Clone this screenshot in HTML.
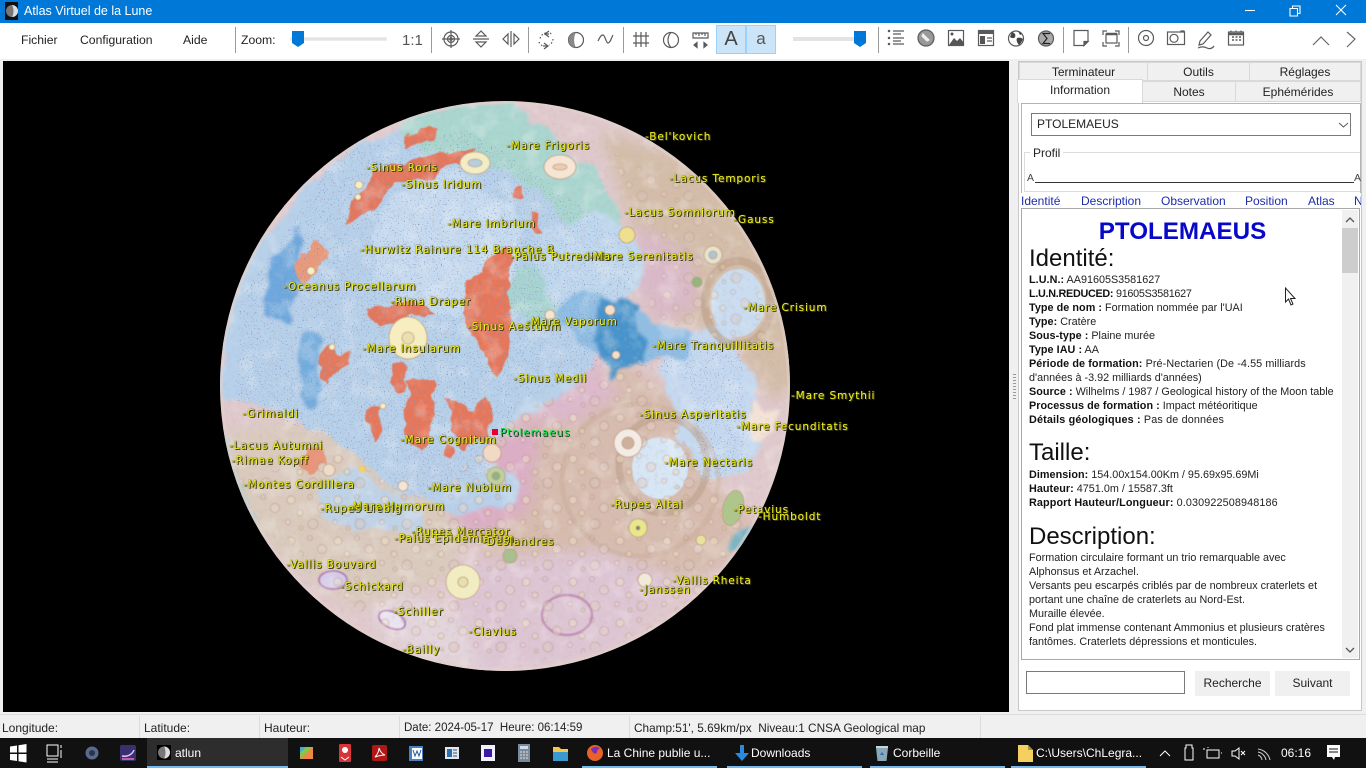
<!DOCTYPE html>
<html lang="fr"><head><meta charset="utf-8"><title>Atlas Virtuel de la Lune</title>
<style>
html,body{margin:0;padding:0;width:1366px;height:768px;overflow:hidden;background:#f0f0f0;font-family:"Liberation Sans",sans-serif}
.a{position:absolute;white-space:nowrap}
.bar{position:absolute;background:#0078d7;left:0;top:0;width:1366px;height:23px}
.ui{font-size:12.2px;color:#222}
.sep{position:absolute;top:27px;height:26px;width:1px;background:#9a9a9a}
.l{position:absolute;white-space:nowrap;font:10.5px "DejaVu Sans",sans-serif;letter-spacing:.88px;color:#f2f21c;text-shadow:1px 1px 0 #3a3a10,0 0 1px #4c4c18,1px 0 1px #55551c;transform:translateY(-50%);line-height:12px}
.t{position:absolute;background:#f0f0f0;border:1px solid #d9d9d9;box-sizing:border-box;text-align:center;font-size:12px;color:#222;line-height:19px}
.p{position:absolute;left:1029px;font-size:10.8px;line-height:14px;color:#222;white-space:nowrap}
.p b{color:#111;letter-spacing:.05px}
.h{position:absolute;left:1029px;font-size:24px;line-height:28px;color:#111;white-space:nowrap}
.nav{position:absolute;top:194px;font-size:12px;color:#1e2ca8;white-space:nowrap;line-height:14px}
.s{position:absolute;top:721px;font-size:12px;color:#222;white-space:nowrap;line-height:14px}
.d{position:absolute;top:716px;width:1px;height:22px;background:#dcdcdc}
.tb{position:absolute;top:746px;font-size:12px;color:#fff;white-space:nowrap;line-height:14px}
.u{position:absolute;top:766px;height:2px;background:#76b9ed}
svg{position:absolute;left:0;top:0;overflow:visible}
</style></head><body>

<div class="bar"></div>
<svg width="20" height="20" style="left:5px;top:2px" viewBox="0 0 20 20"><rect width="13" height="18" fill="#111"/><circle cx="7" cy="9" r="6" fill="#777"/><path d="M7 3a6 6 0 0 1 0 12c2-3 2-9 0-12z" fill="#dedede"/></svg>
<div class="a" style="left:24px;top:4px;font-size:12.5px;line-height:15px;color:#fff">Atlas Virtuel de la Lune</div>
<svg width="1366" height="23" fill="none" stroke="#fff" stroke-width="1.100"><path d="M1245 10.500h10"/><path d="M1290 8.500h7.500v7.500h-7.500zM1292.500 8.500v-2.500h7.500v7.500h-2.500"/><path d="M1336 5l10 10M1346 5l-10 10"/></svg>

<div class="a" style="left:0;top:23px;width:1366px;height:36px;background:#fff"></div>
<div class="a ui" style="left:21px;top:33px">Fichier</div>
<div class="a ui" style="left:80px;top:33px">Configuration</div>
<div class="a ui" style="left:183px;top:33px">Aide</div>
<div class="a ui" style="left:241px;top:33px">Zoom:</div>
<div class="a" style="left:402px;top:32px;font-size:15px;color:#555">1:1</div>
<div class="sep" style="left:235px"></div><div class="sep" style="left:431px"></div><div class="sep" style="left:528px"></div><div class="sep" style="left:623px"></div><div class="sep" style="left:878px"></div><div class="sep" style="left:1063px"></div><div class="sep" style="left:1128px"></div>
<div class="a" style="left:290px;top:37px;width:97px;height:4px;background:#e3e3e3;border:1px solid #ececec;box-sizing:border-box"></div>
<div class="a" style="left:793px;top:37px;width:73px;height:4px;background:#e3e3e3"></div>
<div class="a" style="left:716px;top:25px;width:30px;height:29px;background:#cce4f7;border:1px solid #99d1ff;box-sizing:border-box;text-align:center;font-size:20px;line-height:27px;color:#444">A</div>
<div class="a" style="left:746px;top:25px;width:30px;height:29px;background:#cce4f7;border:1px solid #99d1ff;box-sizing:border-box;text-align:center;font-size:17px;line-height:25px;color:#555">a</div>

<svg width="1366" height="60" fill="none" stroke="#5a5a5a" stroke-width="1.200">
<path d="M292 31h12v12l-6 4-6-4z M854 31h12v12l-6 4-6-4z" fill="#0078d7" stroke="none"/>
<circle cx="451" cy="39" r="7"/><circle cx="451" cy="39" r="3.500"/><circle cx="451" cy="39" r="1.200" fill="#5a5a5a"/><path d="M451 30v18M442 39h18"/>
<path d="M473 39h16M481 31l-5 5h10zM481 47l-5-5h10z"/>
<path d="M511 31v16M503 39l5-5v10zM519 39l-5-5v10z"/>
<path d="M546 33a7 7 0 0 0-6 6M553 39a7 7 0 0 1-4 6M539 42a7 7 0 0 0 4 4M550 33a7 7 0 0 1 2 2" stroke-dasharray="1.500 2"/><path d="M549 31l-4 3 4 3M544 43l4 3-4 3M544 34h5M543 46h5"/>
<circle cx="576" cy="40" r="7.500"/><path d="M576 32.500a7.500 7.500 0 0 0 0 15c-2.500-4-2.500-11 0-15z" fill="#888" stroke="none"/>
<path d="M598 41c2-4 3-6 5-6s3 8 5 8 3-4 5-8" />
<path d="M636 32v15M641 32v15M646 32v15M633 36h16M633 43h16"/>
<circle cx="671" cy="40" r="7.500"/><path d="M671 32.500c-4 4-4 11 0 15"/>
<path d="M693 33h15v5h-15zM696 33v2M699 33v3M702 33v2M705 33v3"/><path d="M694 45l3-2.500v5zM707 45l-3-2.500v5z" fill="#5a5a5a"/>
<path d="M889 31h0M889 38h0M889 44h0" stroke-width="2.500" stroke-linecap="round"/><path d="M893 31h11M893 34h8M893 38h11M893 41h8M893 44h11"/>
<circle cx="926" cy="38" r="8" fill="#999"/><path d="M923 34l6 6-2 1-5-5z" fill="#eee" stroke="#eee"/>
<rect x="948.500" y="30.500" width="15" height="15" fill="#fff"/><path d="M949 45l5-7 3 3 3-3 4 5v2z" fill="#555" stroke="none"/><circle cx="952" cy="34" r="1.500" fill="#555" stroke="none"/>
<rect x="978.500" y="30.500" width="15" height="15"/><path d="M979 32.500h14" stroke-width="3"/><rect x="980" y="36" width="5" height="8" fill="#555" stroke="none"/><path d="M987 38h5M987 41h5"/>
<circle cx="1016" cy="38.500" r="7.500"/><path d="M1012 32c3 1 4 3 3 5s-4 1-5 0zM1017 38c3-1 5 0 6 1-1 3-3 5-4 6-2-2-3-5-2-7zM1018 31l4 3-2 1z" fill="#444" stroke="none"/>
<circle cx="1046" cy="38.500" r="7.500" fill="#aaa"/><path d="M1050 33.500h-7l4 5-4 5h7" stroke="#222"/>
<path d="M1074 30.500h14v11l-4 4h-10z"/><path d="M1088 41.500h-4v4z" fill="#555"/>
<rect x="1106" y="34" width="11" height="9"/><path d="M1106 34h11" stroke-width="2.500"/><path d="M1103 35v-4h4M1115 31h4v4M1103 42v4h4M1119 42v4h-4"/>
<circle cx="1146" cy="38" r="7.500"/><circle cx="1146" cy="38" r="2.500"/>
<rect x="1167.500" y="32" width="17" height="12.500"/><circle cx="1174" cy="38.300" r="4"/><path d="M1181 32v-1h3v1"/>
<path d="M1200 41l8-9 3 3-8 9-4 1z"/><path d="M1198 48c4-2 7-1 9 0s5 1 7-2"/>
<rect x="1228.500" y="32" width="15" height="13"/><path d="M1229 34h14" stroke-width="2.500"/><path d="M1231 30.500v2M1236 30.500v2M1241 30.500v2"/><path d="M1232 37h2M1235.500 37h2M1239 37h2M1232 40h2M1235.500 40h2M1239 40h2" stroke-width="1.500"/>
<path d="M1313 45l8-8 8 8M1347 32l8 7-8 8" stroke="#666"/>
</svg>

<div class="a" style="left:3px;top:61px;width:1006px;height:651px;background:#000"></div>

<svg width="1366" height="768" viewBox="0 0 1366 768">
<defs>
<clipPath id="m"><circle cx="505" cy="386" r="285"/></clipPath>
<clipPath id="mare"><path d="M240 300L340 150 470 130 560 190 640 250 620 340 740 340 750 470 700 480 690 380 620 360 520 400 490 470 420 500 330 440 235 400z"/></clipPath>
<filter id="b2" x="-20%" y="-20%" width="140%" height="140%"><feGaussianBlur stdDeviation="7"/></filter>
<filter id="wob" x="-10%" y="-10%" width="120%" height="120%"><feTurbulence type="fractalNoise" baseFrequency=".045" numOctaves="3" seed="5" result="n"/><feDisplacementMap in="SourceGraphic" in2="n" scale="16" xChannelSelector="R" yChannelSelector="G"/><feGaussianBlur stdDeviation=".6"/></filter>
<filter id="wob2" x="-10%" y="-10%" width="120%" height="120%"><feTurbulence type="fractalNoise" baseFrequency=".03" numOctaves="3" seed="12" result="n"/><feDisplacementMap in="SourceGraphic" in2="n" scale="26" xChannelSelector="R" yChannelSelector="G"/><feGaussianBlur stdDeviation="1.500"/></filter>
<filter id="sf"><feGaussianBlur stdDeviation=".6"/></filter>
<filter id="sp" x="0" y="0" width="100%" height="100%"><feTurbulence type="fractalNoise" baseFrequency=".7" numOctaves="2" seed="4"/><feColorMatrix values="0 0 0 0 .2 0 0 0 0 .26 0 0 0 0 .5 0 0 0 11 -7.200"/></filter>
<filter id="tx" x="0" y="0" width="100%" height="100%"><feTurbulence type="fractalNoise" baseFrequency=".05" numOctaves="3" seed="9"/><feColorMatrix values="0 0 0 0 .98 0 0 0 0 .96 0 0 0 0 .94 0 0 0 4 -2"/></filter>
<filter id="tz" x="0" y="0" width="100%" height="100%"><feTurbulence type="fractalNoise" baseFrequency=".22" numOctaves="3" seed="21"/><feColorMatrix values="0 0 0 0 .62 0 0 0 0 .42 0 0 0 0 .42 0 0 0 5 -2.800"/></filter>
<pattern id="cr" width="47" height="41" patternUnits="userSpaceOnUse">
<g fill="none" stroke="#b98f86" stroke-width="1">
<circle cx="9" cy="8" r="4" fill="#efe4c6"/><circle cx="28" cy="5" r="2.500"/><circle cx="40" cy="16" r="4.500" fill="#e7d4cc"/><circle cx="18" cy="21" r="3" fill="#e5e2b4"/><circle cx="6" cy="30" r="2.500" fill="#ecd7d2"/><circle cx="31" cy="32" r="5" fill="#dcc7be"/><circle cx="19" cy="36" r="2" fill="#c9d6a4"/>
</g></pattern>
</defs>
<g clip-path="url(#m)">
<rect x="220" y="100" width="572" height="572" fill="#dfc9cd"/>
<g filter="url(#b2)">
<path d="M600 130L720 170 800 300 800 390 770 400 720 330 650 320 640 250z" fill="#d3bda9"/>
<path d="M520 420l100-60 60 40 40 90 40 40-40 40-120 30-110-20-20-80z" fill="#d6bcae"/>
<path d="M225 430l110-10 90 40 50 70-30 50-90 30-90-60-40-70z" fill="#d9cabd"/>
<path d="M470 560l130-10 80 30-70 70-130 30-30-50z" fill="#ddc6d4"/>
<path d="M400 590l60 30 20 50-60-10-50-40z" fill="#e2d6dc"/>
<path d="M490 440l50-20-10 90-60 30-30-40z" fill="#dbaec6"/>
<path d="M530 345l60 10 30 40-50 30-60-10z" fill="#dcb9cc"/>
<path d="M500 340l30-10 20 50-20 30-30-10z" fill="#d3b3c8"/>
<path d="M640 225l50 30 10 50-40 20-30-50z" fill="#d9b9c8"/>
</g>
<g filter="url(#wob2)">
<path d="M228 400L222 340C235 270 280 205 340 155 390 125 460 112 510 125 560 150 600 200 630 240 640 280 625 320 605 350 570 395 520 415 505 430 490 470 440 498 410 492 370 480 340 430 290 418 260 410 240 400 228 400z" fill="#b7d1ea"/>
<path d="M400 108l110-6 90 71 25 55-40 12-55-55-60-30-30 5-40-25z" fill="#a9d6cf"/>
<path d="M500 258l40 10 25 45-25 15-45-25-6-30z" fill="#a7d4d2"/>
<path d="M660 335l70-8 30 60-8 90-45 5-32-45z" fill="#c4d9f0"/>
<path d="M752 405l22 0 0 26-20 16-12-22z" fill="#f3e2d6"/>
<circle cx="445" cy="245" r="72" fill="#c6dbf0"/>
<ellipse cx="590" cy="265" rx="55" ry="48" fill="#c0d8ee"/>
<path d="M545 305l55-14 40 20 55 22-15 22-50 10-40-20-30-25z" fill="#8fbee4"/>
<path d="M600 298l38 5 4 55-28 18-18-40z" fill="#4794cc"/>
<path d="M262 300l10-45 28-30 2 30-6 50-8 14-20-2z" fill="#6da8de"/>
<path d="M303 335l16 2 3 48-6 22-20-12z" fill="#72addf"/>
<path d="M222 425l12 50 40 90 30 30-40 0-50-110z" fill="#9dcbc8"/>
<path d="M735 535l30-25 8-6-22 42-18 10z" fill="#7bb6c6"/>
<path d="M400 440l50-10 40 30 30 30-10 20-60 5-50-30z" fill="#b8d0e9"/>
<path d="M320 490l30-20 60 30 20 30-70 0-40-15z" fill="#bed3e8"/>
</g>
<g filter="url(#wob)">
<path d="M402 136q18-9 35-8l-4 10-28 8zM347 224l6-28 20-22 30-12 30-8 26-6 20 0-12 12-36 18-30 5-14 10-12 18-14 4z" fill="#e4775c"/>
<path d="M513 184l9-1 0 14-9 0zM530 212l8 0 3 22-8 0z" fill="#e4775c"/>
<path d="M296 262l5-12 16-8 10 10-5 22-16 8-8-6z" fill="#e99a7c"/>
<path d="M466 280l22-20 22-12 0 60-2 60-10 12-14-28-12-16-8-28z" fill="#e6775a"/>
<path d="M366 310l20-8 30 0 14 10-20 6-8 6-28 2z" fill="#e3775b"/>
<path d="M322 352l10-8 4 8 16-2-6 14-12 8-6 12-6-6 2-12-6-6z" fill="#e47a5d"/>
<path d="M388 366l12-4 8 8-2 16-10 8-8-14zM408 382l24-2 4 30-4 30-10 12-10-8-8-30z" fill="#e6775a"/>
<path d="M444 398l16 4 12 10 14-16 6 24-2 24-14-4-12 8-12-18zM446 442l8 2-2 14-8-6zM366 412l16-4-2 20-6 12-4-14-6-6z" fill="#e6775a"/>
<path d="M308 448l14-2 2 20-16 6-6-10z" fill="#e8957a"/>
</g>
<g fill="none" filter="url(#sf)">
<ellipse cx="738" cy="303" rx="33" ry="42" stroke="#bda288" stroke-width="8" opacity=".65"/>
<ellipse cx="738" cy="303" rx="27" ry="34" fill="#c9dcf0"/>
<ellipse cx="663" cy="465" rx="44" ry="48" stroke="#b99c86" stroke-width="7" opacity=".55"/>
<ellipse cx="660" cy="468" rx="28" ry="31" fill="#d6e6f5"/>
<ellipse cx="640" cy="480" rx="78" ry="76" stroke="#c7a78f" stroke-width="5" opacity=".35"/>
<ellipse cx="567" cy="615" rx="25" ry="20" stroke="#bb85b0" stroke-width="2.500" opacity=".8"/>
<ellipse cx="333" cy="580" rx="14" ry="9" fill="#d3cbe8" stroke="#b583b6" stroke-width="2"/>
<ellipse cx="392" cy="620" rx="14" ry="8" fill="#e8e3f0" stroke="#b583b6" stroke-width="2" transform="rotate(25 392 620)"/>
</g>
<path d="M500 420L640 360 700 470 760 530 680 620 560 660 420 650 330 590 240 480 340 450 430 510z" fill="url(#cr)" opacity=".45" filter="url(#sf)"/>
<path d="M610 150L690 190 760 290 780 370 730 340 650 320 650 240z" fill="url(#cr)" opacity=".35" filter="url(#sf)"/>
<rect x="220" y="100" width="572" height="572" filter="url(#tz)" opacity=".18"/>
<rect x="220" y="100" width="572" height="572" filter="url(#tx)" opacity=".22"/>
<g clip-path="url(#mare)"><rect x="220" y="100" width="572" height="572" filter="url(#sp)" opacity=".75"/></g>
<circle cx="505" cy="386" r="283.500" fill="none" stroke="#e2d2cc" stroke-width="3" opacity=".55"/>
<g stroke="#c09a80" stroke-width=".8" filter="url(#sf)">
<ellipse cx="408" cy="338" rx="19" ry="21" fill="#f6edc0"/><circle cx="408" cy="338" r="6" fill="#e8e0ae"/>
<ellipse cx="475" cy="163" rx="15" ry="11" fill="#f3edc6"/><ellipse cx="475" cy="163" rx="7" ry="4" fill="#b5cfdc"/>
<ellipse cx="560" cy="167" rx="16" ry="12" fill="#f6e4d4"/><ellipse cx="560" cy="167" rx="7" ry="3" fill="#eccdb4"/>
<circle cx="463" cy="582" r="17" fill="#f1ecc2"/><circle cx="463" cy="582" r="5" fill="#e6e0ac"/>
<circle cx="627" cy="235" r="8" fill="#eee08e"/>
<circle cx="713" cy="255" r="9" fill="#e8e2cd"/><circle cx="713" cy="255" r="4" fill="#a9c6d6"/>
<circle cx="697" cy="282" r="5" fill="#8fb77e"/>
<circle cx="628" cy="443" r="14" fill="#f3ece6"/><circle cx="628" cy="443" r="6" fill="#cfb09c"/>
<circle cx="638" cy="528" r="9" fill="#e6e88a"/><circle cx="638" cy="528" r="2" fill="#777"/>
<ellipse cx="733" cy="508" rx="10" ry="18" fill="#aec68c" transform="rotate(15 733 508)"/>
<circle cx="496" cy="476" r="9" fill="#bcd29c"/><circle cx="496" cy="476" r="4" fill="#90b480"/>
<circle cx="492" cy="453" r="9" fill="#f2d9c6"/>
<circle cx="610" cy="310" r="5" fill="#f6dfc8"/><circle cx="616" cy="355" r="4" fill="#f6dfc8"/>
<circle cx="550" cy="315" r="5" fill="#f4e7d0"/>
<circle cx="359" cy="185" r="4" fill="#f6f0c4"/><circle cx="358" cy="197" r="3" fill="#f6f0c4"/><circle cx="311" cy="271" r="4" fill="#f6f0c4"/>
<circle cx="332" cy="347" r="3" fill="#f6f0c4"/><circle cx="383" cy="406" r="3" fill="#f6f0c4"/>
<circle cx="403" cy="486" r="5" fill="#f3e6d8"/><circle cx="329" cy="470" r="6" fill="#ecdcc8"/>
<circle cx="362" cy="469" r="3" fill="#f5d650" stroke="none"/>
<circle cx="645" cy="580" r="7" fill="#f2ead8"/><circle cx="510" cy="556" r="7" fill="#a6c08e"/><circle cx="701" cy="540" r="5" fill="#e8e2a0"/>
</g>
</g>
<rect x="492" y="429" width="6" height="6" fill="#e8002a"/>
</svg>

<div class="l" style="left:645px;top:137px">-Bel'kovich</div>
<div class="l" style="left:506px;top:146px">-Mare Frigoris</div>
<div class="l" style="left:366px;top:168px">-Sinus Roris</div>
<div class="l" style="left:669px;top:179px">-Lacus Temporis</div>
<div class="l" style="left:401px;top:185px">-Sinus Iridum</div>
<div class="l" style="left:624px;top:213px">-Lacus Somniorum</div>
<div class="l" style="left:733px;top:220px">-Gauss</div>
<div class="l" style="left:447px;top:224px">-Mare Imbrium</div>
<div class="l" style="left:360px;top:250px">-Hurwitz Rainure 114 Branche B</div>
<div class="l" style="left:510px;top:257px">-Palus Putredinis</div>
<div class="l" style="left:589px;top:257px">-Mare Serenitatis</div>
<div class="l" style="left:283px;top:287px">-Oceanus Procellarum</div>
<div class="l" style="left:390px;top:302px">-Rima Draper</div>
<div class="l" style="left:743px;top:308px">-Mare Crisium</div>
<div class="l" style="left:467px;top:327px">-Sinus Aestuum</div>
<div class="l" style="left:526px;top:322px">-Mare Vaporum</div>
<div class="l" style="left:652px;top:346px">-Mare Tranquillitatis</div>
<div class="l" style="left:362px;top:349px">-Mare Insularum</div>
<div class="l" style="left:513px;top:379px">-Sinus Medii</div>
<div class="l" style="left:791px;top:396px">-Mare Smythii</div>
<div class="l" style="left:242px;top:414px">-Grimaldi</div>
<div class="l" style="left:639px;top:415px">-Sinus Asperitatis</div>
<div class="l" style="left:736px;top:427px">-Mare Fecunditatis</div>
<div class="l" style="left:500px;top:433px;color:#10e040;text-shadow:1px 1px 0 #0c4420">Ptolemaeus</div>
<div class="l" style="left:400px;top:440px">-Mare Cognitum</div>
<div class="l" style="left:229px;top:446px">-Lacus Autumni</div>
<div class="l" style="left:231px;top:461px">-Rimae Kopff</div>
<div class="l" style="left:664px;top:463px">-Mare Nectaris</div>
<div class="l" style="left:243px;top:485px">-Montes Cordillera</div>
<div class="l" style="left:427px;top:488px">-Mare Nubium</div>
<div class="l" style="left:348px;top:507px">-Mare Humorum</div>
<div class="l" style="left:320px;top:509px">-Rupes Liebig</div>
<div class="l" style="left:610px;top:505px">-Rupes Altai</div>
<div class="l" style="left:733px;top:510px">-Petavius</div>
<div class="l" style="left:758px;top:517px">-Humboldt</div>
<div class="l" style="left:411px;top:532px">-Rupes Mercator</div>
<div class="l" style="left:394px;top:539px">-Palus Epidemiarum</div>
<div class="l" style="left:482px;top:542px">-Deslandres</div>
<div class="l" style="left:286px;top:565px">-Vallis Bouvard</div>
<div class="l" style="left:340px;top:587px">-Schickard</div>
<div class="l" style="left:672px;top:581px">-Vallis Rheita</div>
<div class="l" style="left:639px;top:590px">-Janssen</div>
<div class="l" style="left:393px;top:612px">-Schiller</div>
<div class="l" style="left:468px;top:632px">-Clavius</div>
<div class="l" style="left:402px;top:650px">-Bailly</div>

<div class="a" style="left:1013px;top:374px;width:3px;height:26px;background:repeating-linear-gradient(#999 0 1px,transparent 1px 3px)"></div>

<div class="a" style="left:1018px;top:61px;width:344px;height:650px;background:#fff;border:1px solid #c8c8c8;box-sizing:border-box"></div>
<div class="t" style="left:1019px;top:62px;width:129px;height:19px">Terminateur</div>
<div class="t" style="left:1147px;top:62px;width:103px;height:19px">Outils</div>
<div class="t" style="left:1249px;top:62px;width:112px;height:19px">Réglages</div>
<div class="t" style="left:1142px;top:81px;width:94px;height:21px;line-height:20px">Notes</div>
<div class="t" style="left:1235px;top:81px;width:126px;height:21px;line-height:20px">Ephémérides</div>
<div class="t" style="left:1017px;top:79px;width:126px;height:24px;background:#fff;border-bottom:0;line-height:20px">Information</div>
<div class="a" style="left:1021px;top:103px;width:340px;height:90px;border:1px solid #b5b5b5;border-bottom:0;box-sizing:border-box"></div>
<div class="a" style="left:1031px;top:113px;width:320px;height:23px;border:1px solid #7a7a7a;box-sizing:border-box;font-size:12px;line-height:20px;padding-left:5px;color:#222">PTOLEMAEUS</div>
<svg width="1366" height="200" fill="none" stroke="#555"><path d="M1339 123l4.500 4 4.500-4"/></svg>
<div class="a" style="left:1024px;top:152px;width:336px;height:40px;border:1px solid #dcdcdc;border-right:0;box-sizing:border-box"></div>
<div class="a" style="left:1030px;top:146px;padding:0 3px;background:#fff;font-size:12px;line-height:14px;color:#222">Profil</div>
<div class="a" style="left:1027px;top:172px;font-size:10.500px;color:#444;line-height:12px">A</div>
<div class="a" style="left:1035px;top:182px;width:319px;height:1px;background:#333"></div>
<div class="a" style="left:1354px;top:172px;font-size:10.500px;color:#444;line-height:12px">A</div>
<div class="a" style="left:1021px;top:192px;width:340px;height:16px;overflow:hidden">
<span class="nav" style="left:0;top:2px">Identité</span><span class="nav" style="left:60px;top:2px">Description</span><span class="nav" style="left:140px;top:2px">Observation</span><span class="nav" style="left:224px;top:2px">Position</span><span class="nav" style="left:287px;top:2px">Atlas</span><span class="nav" style="left:333px;top:2px">N</span>
</div>
<div class="a" style="left:1021px;top:208px;width:339px;height:452px;border:1px solid #a8a8a8;box-sizing:border-box;background:#fff"></div>
<div class="a" style="left:1342px;top:210px;width:16px;height:448px;background:#f0f0f0"></div>
<div class="a" style="left:1342px;top:228px;width:16px;height:45px;background:#cdcdcd"></div>
<svg width="1366" height="660" fill="none" stroke="#555" stroke-width="1.300"><path d="M1346 222l4-4 4 4M1346 648l4 4 4-4"/></svg>

<div class="a" style="left:1022px;top:217px;width:321px;text-align:center;font-size:24.200px;font-weight:bold;color:#0808c8;line-height:29px">PTOLEMAEUS</div>
<div class="h" style="top:245px">Identité:</div>
<div class="p" style="top:273px"><b>L.U.N.:</b> AA91605S3581627</div>
<div class="p" style="top:287px;letter-spacing:-.28px"><b style="letter-spacing:-.28px">L.U.N.REDUCED:</b> 91605S3581627</div>
<div class="p" style="top:301px"><b>Type de nom :</b> Formation nommée par l'UAI</div>
<div class="p" style="top:315px"><b>Type:</b> Cratère</div>
<div class="p" style="top:329px"><b>Sous-type :</b> Plaine murée</div>
<div class="p" style="top:343px"><b>Type IAU :</b> AA</div>
<div class="p" style="top:357px;letter-spacing:.09px"><b style="letter-spacing:.09px">Période de formation:</b> Pré-Nectarien (De -4.55 milliards</div>
<div class="p" style="top:371px">d'années à -3.92 milliards d'années)</div>
<div class="p" style="top:385px"><b>Source :</b> Wilhelms / 1987 / Geological history of the Moon table</div>
<div class="p" style="top:399px"><b>Processus de formation :</b> Impact météoritique</div>
<div class="p" style="top:413px;letter-spacing:.15px"><b style="letter-spacing:.15px">Détails géologiques :</b> Pas de données</div>
<div class="h" style="top:439px">Taille:</div>
<div class="p" style="top:468px"><b>Dimension:</b> 154.00x154.00Km / 95.69x95.69Mi</div>
<div class="p" style="top:482px"><b>Hauteur:</b> 4751.0m / 15587.3ft</div>
<div class="p" style="top:496px;letter-spacing:.12px"><b style="letter-spacing:.12px">Rapport Hauteur/Longueur:</b> 0.030922508948186</div>
<div class="h" style="top:523px">Description:</div>
<div class="p" style="top:551px">Formation circulaire formant un trio remarquable avec</div>
<div class="p" style="top:565px">Alphonsus et Arzachel.</div>
<div class="p" style="top:579px">Versants peu escarpés criblés par de nombreux craterlets et</div>
<div class="p" style="top:593px">portant une chaîne de craterlets au Nord-Est.</div>
<div class="p" style="top:607px">Muraille élevée.</div>
<div class="p" style="top:621px">Fond plat immense contenant Ammonius et plusieurs cratères</div>
<div class="p" style="top:635px">fantômes. Craterlets dépressions et monticules.</div>

<svg width="1366" height="320" fill="#fff" stroke="#222" stroke-width="1"><path d="M1285.500 288v14l3-3 2.500 6 2-1-2.500-5.500h4.500z"/></svg>

<div class="a" style="left:1026px;top:671px;width:159px;height:23px;border:1px solid #7a7a7a;box-sizing:border-box;background:#fff"></div>
<div class="a" style="left:1195px;top:671px;width:75px;height:25px;background:#f0f0f0;text-align:center;font-size:12px;line-height:25px;color:#222">Recherche</div>
<div class="a" style="left:1275px;top:671px;width:75px;height:25px;background:#f0f0f0;text-align:center;font-size:12px;line-height:25px;color:#222">Suivant</div>

<div class="a" style="left:0;top:714px;width:1366px;height:1px;background:#dcdcdc"></div>
<div class="s" style="left:2px">Longitude:</div><div class="s" style="left:144px">Latitude:</div><div class="s" style="left:264px">Hauteur:</div>
<div class="s" style="left:404px;font-size:11.500px">Date: 2024-05-17&nbsp;&nbsp;Heure: 06:14:59</div>
<div class="s" style="left:634px;font-size:11.800px">Champ:51', 5.69km/px&nbsp;&nbsp;Niveau:1 CNSA Geological map</div>
<div class="d" style="left:139px"></div><div class="d" style="left:259px"></div><div class="d" style="left:399px"></div><div class="d" style="left:629px"></div><div class="d" style="left:980px"></div>

<div class="a" style="left:0;top:738px;width:1366px;height:30px;background:#111"></div>
<div class="a" style="left:147px;top:738px;width:141px;height:30px;background:#2d2d2d"></div>
<div class="u" style="left:147px;width:141px"></div><div class="u" style="left:582px;width:135px"></div><div class="u" style="left:727px;width:135px"></div><div class="u" style="left:870px;width:135px"></div><div class="u" style="left:1011px;width:135px"></div>
<svg width="1366" height="768" fill="none">
<path d="M10 746.500l7-1v7h-7zM18.500 745.300l8-1.300v8.500h-8zM10 754h7v7l-7-1zM18.500 754h8v8.500l-8-1.300z" fill="#fff"/>
<path d="M47 745h11v11h-11zM47 759h11M47 762h11M61 745v3M61 750v8" stroke="#fff"/>
<circle cx="92" cy="753" r="6.500" fill="#5a6a8a"/><circle cx="92" cy="753" r="3" fill="#2a3450"/>
<rect x="120" y="745" width="16" height="16" rx="2" fill="#3a3070"/><path d="M122 756c5 1 10-1 12-6" stroke="#d8c8ff" stroke-width="1.500"/><path d="M122 759h12" stroke="#c060a0" stroke-width="2"/>
<rect x="157" y="745" width="14" height="15" fill="#000"/><circle cx="164" cy="752.500" r="6" fill="#777"/><path d="M164 746.500a6 6 0 0 1 0 12c2-3 2-9 0-12z" fill="#ddd"/>
<rect x="300" y="747" width="13" height="12" fill="#8bc34a"/><path d="M300 759l13-12v12z" fill="#e84"/><path d="M300 747h6l-6 6z" fill="#4ad"/>
<rect x="339" y="744" width="12" height="18" rx="1" fill="#d8353a"/><circle cx="345" cy="750" r="3" fill="#fff"/><path d="M341 757l4 3 4-3" stroke="#fff"/>
<rect x="372" y="745" width="15" height="16" rx="2" fill="#b01818"/><path d="M375 757c3-3 4-7 4-9 1 3 3 6 6 7-3 0-7 1-10 2z" stroke="#fff"/>
<rect x="409" y="746" width="14" height="15" fill="#4a80c0"/><rect x="412" y="748" width="10" height="11" fill="#fff"/><path d="M413 750l2 6 2-5 2 5 2-6" stroke="#2a5a9a"/>
<rect x="445" y="747" width="14" height="12" fill="#dfe8f2"/><rect x="447" y="749" width="5" height="8" fill="#2a70b0"/><path d="M453 750h4M453 753h4M453 756h4" stroke="#456"/>
<rect x="481" y="745" width="14" height="16" fill="#f0f0ff"/><rect x="484" y="749" width="8" height="8" fill="#3a1aa0"/>
<rect x="518" y="744" width="12" height="18" fill="#7a8a9a"/><rect x="520" y="746" width="8" height="3" fill="#cde"/><path d="M520 752h8M520 755h8M520 758h8" stroke="#ddd" stroke-dasharray="2 1"/>
<path d="M553 747h6l2 2h7v12h-15z" fill="#f5c84c"/><rect x="553" y="752" width="15" height="9" fill="#3a9ad0"/>
<circle cx="595" cy="753" r="8" fill="#e8632a"/><path d="M591 749c3-3 7-3 9 0-2 0-3 1-3 3s-4 3-6-3z" fill="#7a30b0"/>
<path d="M740 745v8h-5l7 8 7-8h-5v-8z" fill="#2a8ae0"/>
<path d="M876 748h12l-1.500 13h-9z" fill="#8aa8b8"/><rect x="876" y="746" width="12" height="2" fill="#c8d4dc"/><path d="M880 755l2-3 2 3z" fill="#2a70b0"/>
<path d="M1018 745h10l5 5v12h-15z" fill="#f5d060"/><path d="M1028 745v5h5z" fill="#9a9a40"/>
<g stroke="#fff" stroke-width="1"><path d="M1160 756l5-5 5 5"/><path d="M1186 745h6v3h1v12h-8v-12h1z"/><path d="M1207 750h12v8h-12zM1204 748v2M1208 748v-1M1221 753h1" /><path d="M1232 751h3l4-3v11l-4-3h-3zM1241 751l4 4M1245 751l-4 4"/><path d="M1258 760v0M1262 760a6 6 0 0 0-4-5M1266 760a10 10 0 0 0-8-8M1270 760a14 14 0 0 0-12-11" opacity=".8"/></g>
<path d="M1327 745h13v12h-5l-1 3-2-3h-5z" fill="#fff"/><path d="M1329 749h9M1329 752h9" stroke="#111"/>
</svg>
<div class="tb" style="left:175px">atlun</div>
<div class="tb" style="left:607px">La Chine publie u...</div>
<div class="tb" style="left:751px">Downloads</div>
<div class="tb" style="left:893px">Corbeille</div>
<div class="tb" style="left:1036px">C:\Users\ChLegra...</div>
<div class="tb" style="left:1281px">06:16</div>
</body></html>
